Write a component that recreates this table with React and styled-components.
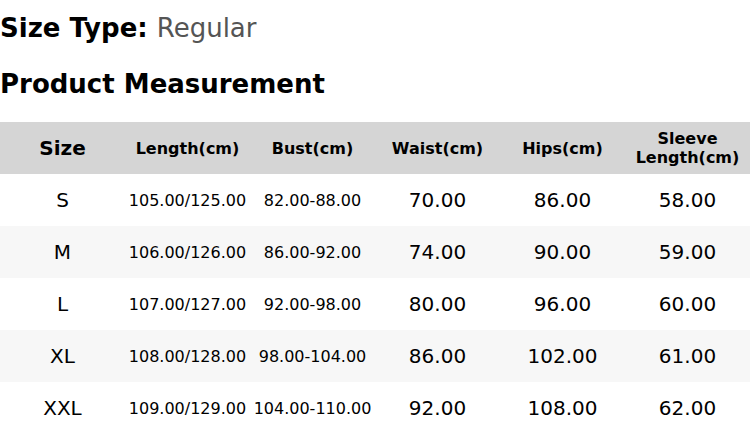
import React from "react";
import styled, { createGlobalStyle } from "styled-components";

const GlobalStyle = createGlobalStyle`
  html, body { margin: 0; padding: 0; background: #ffffff; }
  body { font-family: "DejaVu Sans", Verdana, sans-serif; color: #000; }
`;

const Page = styled.div`
  width: 750px;
  display: flex;
  flex-direction: column;
`;

const SizeType = styled.div`
  margin-top: 13px;
  font-size: 26px;
  line-height: 30px;
  font-weight: bold;
  white-space: nowrap;
`;

const Muted = styled.span`
  font-weight: normal;
  color: #555555;
`;

const Heading = styled.h2`
  margin: 26px 0 0;
  font-size: 26px;
  line-height: 30px;
  font-weight: bold;
`;

const Table = styled.div`
  margin-top: 23px;
  display: grid;
  grid-template-columns: repeat(6, 1fr);
`;

const HeadCell = styled.div`
  height: 52px;
  background: #d5d5d5;
  display: flex;
  align-items: center;
  justify-content: center;
  text-align: center;
  font-weight: bold;
  font-size: ${(p) => (p.$big ? "20px" : "16px")};
  line-height: 19px;
`;

const Cell = styled.div`
  height: 52px;
  background: ${(p) => (p.$alt ? "#f7f7f7" : "#ffffff")};
  display: flex;
  align-items: center;
  justify-content: center;
  text-align: center;
  white-space: nowrap;
  font-size: ${(p) => (p.$small ? "16px" : "20px")};
`;

const headers = [
  { label: "Size", big: true },
  { label: "Length(cm)" },
  { label: "Bust(cm)" },
  { label: "Waist(cm)" },
  { label: "Hips(cm)" },
  { label: "Sleeve\nLength(cm)" },
];

const rows = [
  ["S", "105.00/125.00", "82.00-88.00", "70.00", "86.00", "58.00"],
  ["M", "106.00/126.00", "86.00-92.00", "74.00", "90.00", "59.00"],
  ["L", "107.00/127.00", "92.00-98.00", "80.00", "96.00", "60.00"],
  ["XL", "108.00/128.00", "98.00-104.00", "86.00", "102.00", "61.00"],
  ["XXL", "109.00/129.00", "104.00-110.00", "92.00", "108.00", "62.00"],
];

export default function App() {
  return (
    <Page>
      <GlobalStyle />
      <SizeType>
        Size Type: <Muted>Regular</Muted>
      </SizeType>
      <Heading>Product Measurement</Heading>
      <Table>
        {headers.map((h) => (
          <HeadCell key={h.label} $big={h.big}>
            {h.label.split("\n").map((line, i) => (
              <React.Fragment key={i}>
                {i > 0 && <br />}
                {line}
              </React.Fragment>
            ))}
          </HeadCell>
        ))}
        {rows.map((r, ri) =>
          r.map((v, ci) => (
            <Cell key={`${ri}-${ci}`} $alt={ri % 2 === 1} $small={ci === 1 || ci === 2}>
              {v}
            </Cell>
          ))
        )}
      </Table>
    </Page>
  );
}
